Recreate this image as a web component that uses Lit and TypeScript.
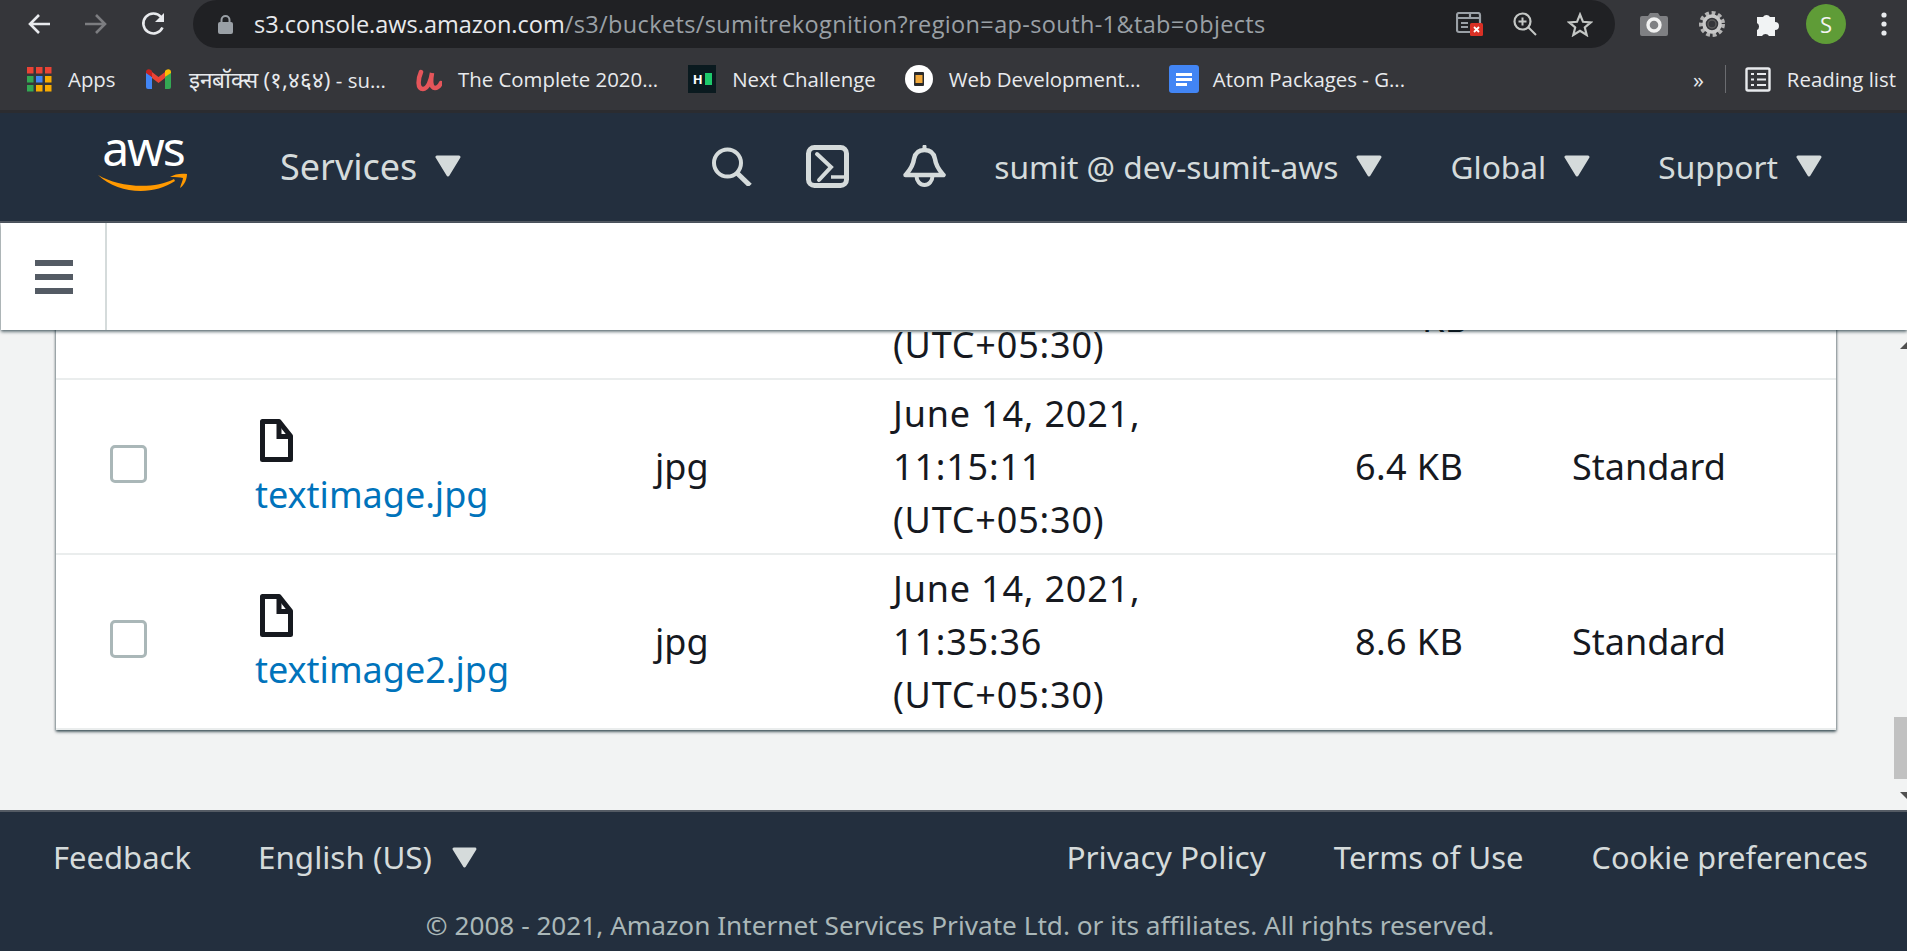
import { LitElement, html, css, svg } from 'lit';
import { customElement } from 'lit/decorators.js';

const caret = html`<svg class="caret" viewBox="0 0 26 22"><path d="M2 2h22L13 20z" fill="#d5dbdb" stroke="#d5dbdb" stroke-width="3" stroke-linejoin="round"/></svg>`;

const fileIcon = html`<svg class="file" width="33" height="43" viewBox="0 0 33 43">
  <path d="M2.5 2.5H19L30.5 17V40.5H2.5z" fill="#fff" stroke="#16191f" stroke-width="5" stroke-linejoin="round"/>
  <path d="M19 3V17.5H30" fill="none" stroke="#16191f" stroke-width="5"/>
</svg>`;

const rows = [
  { name: '', type: '', date: ['', '', '(UTC+05:30)'], size: ['', 'KB'], cls: '', partial: true },
  { name: 'textimage.jpg', type: 'jpg', date: ['June 14, 2021,', '11:15:11', '(UTC+05:30)'], size: ['6.4 KB'], cls: 'Standard', partial: false },
  { name: 'textimage2.jpg', type: 'jpg', date: ['June 14, 2021,', '11:35:36', '(UTC+05:30)'], size: ['8.6 KB'], cls: 'Standard', partial: false },
];

const appColors = ['#ea4335', '#ea4335', '#ea4335', '#34a853', '#4285f4', '#f9ab00', '#34a853', '#f9ab00', '#f9ab00'];

@customElement('browser-chrome')
class BrowserChrome extends LitElement {
  static styles = css`
    :host {
      display: block;
      height: 113px;
      background: #35363a;
      border-bottom: 3px solid #2b2c30;
      box-sizing: border-box;
      font-family: 'Open Sans', sans-serif;
      color: #e8eaed;
    }
    .top {
      height: 48px;
      display: flex;
      align-items: center;
    }
    .nav {
      width: 193px;
      flex: none;
      display: flex;
      align-items: center;
      padding-left: 27px;
      gap: 33px;
      box-sizing: border-box;
    }
    .omni {
      width: 1422px;
      height: 48px;
      flex: none;
      background: #202124;
      border-radius: 24px;
      display: flex;
      align-items: center;
      padding-left: 25px;
      box-sizing: border-box;
    }
    .url {
      margin-left: 21px;
      font-size: 23.5px;
      letter-spacing: 0.37px;
      white-space: nowrap;
      width: 1209px;
      flex: none;
      color: #9aa0a6;
    }
    .url b {
      font-weight: 400;
      letter-spacing: 0;
      color: #e8eaed;
    }
    .omni-icons {
      display: flex;
      align-items: center;
      gap: 30px;
    }
    .ext {
      display: flex;
      align-items: center;
      margin-left: 25px;
      gap: 31px;
    }
    .avatar {
      width: 40px;
      height: 40px;
      border-radius: 50%;
      background: #5f9c37;
      color: #f4f4f4;
      display: flex;
      align-items: center;
      justify-content: center;
      font-size: 22px;
      margin-left: -7px;
    }
    .dots {
      margin-left: 4px;
    }
    .marks {
      height: 62px;
      display: flex;
      align-items: center;
      padding-left: 27px;
      font-size: 20.4px;
      white-space: nowrap;
    }
    .mark {
      display: flex;
      align-items: center;
      gap: 16px;
      margin-right: 30px;
    }
    .hi {
      font-size: 22.5px;
    }
    .hr {
      width: 28px;
      height: 28px;
      background: #0a1a1f;
      color: #fff;
      display: flex;
      align-items: center;
      justify-content: center;
      gap: 2px;
      font-size: 13px;
      font-weight: 700;
      line-height: 1;
    }
    .hr i {
      width: 7px;
      height: 12px;
      background: #1ec96b;
    }
    .spacer {
      flex: 1;
    }
    .more {
      font-size: 22px;
    }
    .sep {
      width: 1px;
      height: 28px;
      background: #6b6c70;
      margin: 0 19px 0 21px;
    }
    .reading {
      margin-right: 11px;
    }
  `;

  render() {
    return html`
      <div class="top">
        <div class="nav">
          <svg width="24" height="22" viewBox="0 0 24 22"><path d="M23 11H3M12 2l-9 9 9 9" fill="none" stroke="#e8eaed" stroke-width="2.6"/></svg>
          <svg width="24" height="22" viewBox="0 0 24 22"><path d="M1 11h20M12 2l9 9-9 9" fill="none" stroke="#7c7d80" stroke-width="2.6"/></svg>
          <svg width="26" height="24" viewBox="0 0 26 24"><path d="M21.5 15.5A10 10 0 1 1 20 5" fill="none" stroke="#e8eaed" stroke-width="2.6"/><path d="M23 1v9h-9z" fill="#e8eaed"/></svg>
        </div>
        <div class="omni">
          <svg width="15" height="19" viewBox="0 0 15 19"><rect x="0" y="7" width="15" height="12" rx="2" fill="#9aa0a6"/><path d="M3.5 8V5a4 4 0 0 1 8 0v3" fill="none" stroke="#9aa0a6" stroke-width="2"/></svg>
          <div class="url"><b>s3.console.aws.amazon.com</b>/s3/buckets/sumitrekognition?region=ap-south-1&amp;tab=objects</div>
          <div class="omni-icons">
            <svg width="27" height="24" viewBox="0 0 27 24" style="margin-left:-7px">
              <path d="M1 3a2 2 0 0 1 2-2h19a2 2 0 0 1 2 2v17H3a2 2 0 0 1-2-2z" fill="none" stroke="#9aa0a6" stroke-width="2.2"/>
              <path d="M1 6h23M14 2v4M5 11h7M5 15h7" stroke="#9aa0a6" stroke-width="2.2"/>
              <rect x="14" y="11" width="13" height="13" rx="1.5" fill="#d93025"/>
              <path d="M18 15l5 5M23 15l-5 5" stroke="#fff" stroke-width="1.8"/>
            </svg>
            <svg width="24" height="24" viewBox="0 0 24 24"><circle cx="9.5" cy="9.5" r="8" fill="none" stroke="#c4c7c5" stroke-width="2.2"/><path d="M15 15l8 8M9.5 5.5v8M5.5 9.5h8" stroke="#c4c7c5" stroke-width="2"/></svg>
            <svg width="26" height="25" viewBox="0 0 26 25"><path d="M13 2.5l3 7.3 7.8.6-6 5 1.9 7.6L13 18.8l-6.700 4.200 1.900-7.600-6-5 7.800-.6z" fill="none" stroke="#c4c7c5" stroke-width="2.200" stroke-linejoin="miter"/></svg>
          </div>
        </div>
        <div class="ext">
          <svg width="28" height="24" viewBox="0 0 28 24"><path d="M2 4h6l2-3h8l2 3h6a2 2 0 0 1 2 2v16a2 2 0 0 1-2 2H2a2 2 0 0 1-2-2V6a2 2 0 0 1 2-2z" fill="#7f8083"/><circle cx="14" cy="13" r="6" fill="none" stroke="#f1f1f1" stroke-width="3.400"/></svg>
          <svg width="26" height="26" viewBox="0 0 26 26"><circle cx="13" cy="13" r="10.500" fill="none" stroke="#b4b4b4" stroke-width="5" stroke-dasharray="3.600 2.500"/><circle cx="13" cy="13" r="8" fill="none" stroke="#c9c9c9" stroke-width="3.500"/><circle cx="13" cy="13" r="4" fill="none" stroke="#5a5a5a" stroke-width="1.500"/></svg>
          <svg width="26" height="25" viewBox="0 0 26 25"><path d="M1 11V5h6a4 4 0 0 1 7 0h5v5a4 4 0 0 1 0 8v6h-6a4 4 0 0 0-7 0H1v-6a4 4 0 0 0 0-7z" fill="#f1f3f4"/></svg>
          <div class="avatar">S</div>
          <svg class="dots" width="6" height="24" viewBox="0 0 6 24"><circle cx="3" cy="3" r="2.600" fill="#e8eaed"/><circle cx="3" cy="12" r="2.600" fill="#e8eaed"/><circle cx="3" cy="21" r="2.600" fill="#e8eaed"/></svg>
        </div>
      </div>
      <div class="marks">
        <div class="mark">
          <svg width="25" height="25" viewBox="0 0 25 25">
            ${appColors.map((c, i) => svg`<rect x=${(i % 3) * 9} y=${Math.floor(i / 3) * 9} width="6.500" height="6.500" fill=${c}/>`)}
          </svg>
          <span>Apps</span>
        </div>
        <div class="mark" style="gap:18px">
          <svg width="25" height="20" viewBox="0 0 25 20">
            <path d="M0 3v15a2 2 0 0 0 2 2h4V8z" fill="#4285f4"/>
            <path d="M25 3v15a2 2 0 0 1-2 2h-4V8z" fill="#34a853"/>
            <path d="M6 9l6.500 5L19 9V3l-6.500 5L6 3z" fill="#ea4335"/>
            <path d="M0 3c0-3 3-3.500 5-2l1 1v6L0 4z" fill="#c5221f"/>
            <path d="M25 3c0-3-3-3.500-5-2l-1 1v6l6-4z" fill="#fbbc04"/>
          </svg>
          <span><span class="hi">इनबॉक्स (१,४६४)</span> - su...</span>
        </div>
        <div class="mark">
          <svg width="26" height="26" viewBox="0 0 26 26"><path d="M5 6C2 13 1 23 7 23c5 0 8-9 9-16-1 6-2 15 3 15 3 0 5-3 6-5" fill="none" stroke="#e5555a" stroke-width="4.500" stroke-linecap="round"/></svg>
          <span>The Complete 2020...</span>
        </div>
        <div class="mark" style="margin-right:29px">
          <div class="hr">H<i></i></div>
          <span>Next Challenge</span>
        </div>
        <div class="mark" style="margin-right:28px">
          <svg width="28" height="28" viewBox="0 0 28 28"><circle cx="14" cy="14" r="14" fill="#fff"/><rect x="9" y="7" width="10" height="14" rx="1" fill="#2b2b2b"/><rect x="10.500" y="10" width="7" height="8" fill="#f2a93b"/></svg>
          <span>Web Development...</span>
        </div>
        <div class="mark" style="gap:14px">
          <svg width="30" height="28" viewBox="0 0 30 28"><rect width="30" height="28" rx="3" fill="#4285f4"/><path d="M7 8h16v3H7zM7 13h16v3H7zM7 18h11v3H7z" fill="#fff"/></svg>
          <span>Atom Packages - G...</span>
        </div>
        <div class="spacer"></div>
        <span class="more">»</span>
        <div class="sep"></div>
        <div class="mark reading">
          <svg width="26" height="25" viewBox="0 0 26 25"><rect x="1.500" y="1.500" width="23" height="22" rx="1.500" fill="none" stroke="#e8eaed" stroke-width="2.400"/><path d="M6 7h3M12 7h9M6 12.500h3M12 12.500h9M6 18h3M12 18h9" stroke="#e8eaed" stroke-width="2.200"/></svg>
          <span>Reading list</span>
        </div>
      </div>
    `;
  }
}

@customElement('console-header')
class ConsoleHeader extends LitElement {
  static styles = css`
    :host {
      display: flex;
      align-items: center;
      height: 110px;
      box-sizing: border-box;
      background: #232f3e;
      border-bottom: 2px solid #545b64;
      padding: 0 0 2px 98px;
      font-family: 'Noto Sans', sans-serif;
      font-size: 31.7px;
      color: #d5dbdb;
      white-space: nowrap;
    }
    .logo {
      width: 90px;
      flex: none;
      display: flex;
      flex-direction: column;
      align-items: center;
      height: 64px;
    }
    .logo span {
      display: block;
      height: 38px;
      font-size: 48px;
      line-height: 28px;
      color: #fff;
      letter-spacing: -2px;
    }
    .menu {
      display: flex;
      align-items: center;
      gap: 18px;
    }
    .caret {
      width: 26px;
      height: 22px;
      flex: none;
    }
    .services {
      margin-left: 92px;
      font-size: 36px;
    }
    .tools {
      display: flex;
      align-items: center;
      margin-left: 251px;
      gap: 54px;
    }
    .account {
      margin-left: 48px;
    }
    .region {
      margin-left: 68px;
    }
    .support {
      margin-left: 68px;
    }
  `;

  render() {
    return html`
      <div class="logo">
        <span>aws</span>
        <svg width="90" height="22" viewBox="0 0 90 22">
          <path d="M0 3C20 15 55 18 76 7l1 2C55 24 20 22 0 3z" fill="#f90"/>
          <path d="M72 5c4-3 12-4 17-3 0 4-2 11-7 14 1-4 3-8 3-10-3-1-8-1-13-1z" fill="#f90"/>
        </svg>
      </div>
      <div class="menu services"><span>Services</span>${caret}</div>
      <div class="tools">
        <svg width="40" height="40" viewBox="0 0 40 40"><circle cx="15.500" cy="17" r="13.500" fill="none" stroke="#d5dbdb" stroke-width="4"/><path d="M25 27l13 12.500" stroke="#d5dbdb" stroke-width="5"/></svg>
        <svg width="43" height="43" viewBox="0 0 43 43"><rect x="2.500" y="2.500" width="38" height="38" rx="6" fill="none" stroke="#d5dbdb" stroke-width="5"/><path d="M11 9l14 13-12 13" fill="none" stroke="#d5dbdb" stroke-width="4" stroke-linecap="round"/><path d="M25 32h14" stroke="#d5dbdb" stroke-width="3.500"/></svg>
        <svg width="43" height="43" viewBox="0 0 43 43"><path d="M2.500 30C6 26 10 22 11 14 12 8 16 5 21.500 5S31 8 32 14c1 8 5 12 8.500 16z" fill="none" stroke="#d5dbdb" stroke-width="4.500" stroke-linejoin="round"/><path d="M21.500 1.500V5" stroke="#d5dbdb" stroke-width="4" stroke-linecap="round"/><path d="M13.500 31a8 9 0 0 0 16 0" fill="none" stroke="#d5dbdb" stroke-width="4"/></svg>
      </div>
      <div class="menu account"><span>sumit @ dev-sumit-aws</span>${caret}</div>
      <div class="menu region"><span>Global</span>${caret}</div>
      <div class="menu support"><span>Support</span>${caret}</div>
    `;
  }
}

@customElement('console-footer')
class ConsoleFooter extends LitElement {
  static styles = css`
    :host {
      display: block;
      height: 141px;
      box-sizing: border-box;
      background: #232f3e;
      border-top: 2px solid #545b64;
      font-family: 'Noto Sans', sans-serif;
      color: #d5dbdb;
      white-space: nowrap;
    }
    .links {
      display: flex;
      align-items: center;
      justify-content: space-between;
      padding: 23px 39px 0 53px;
      font-size: 31px;
      line-height: 44px;
    }
    .group {
      display: flex;
      align-items: center;
    }
    .left {
      gap: 67px;
    }
    .right {
      gap: 68px;
    }
    .lang {
      display: flex;
      align-items: center;
      gap: 20px;
      font-size: 31.4px;
    }
    .privacy {
      font-size: 31.6px;
    }
    .cookie {
      font-size: 30.6px;
    }
    .caret {
      width: 25px;
      height: 21px;
    }
    .copy {
      margin-top: 29px;
      text-align: center;
      font-size: 26.2px;
      line-height: 34px;
      color: #aab7b8;
      padding-left: 13px;
    }
  `;

  render() {
    return html`
      <div class="links">
        <div class="group left">
          <span>Feedback</span>
          <span class="lang">English (US) ${caret}</span>
        </div>
        <div class="group right">
          <span class="privacy">Privacy Policy</span>
          <span>Terms of Use</span>
          <span class="cookie">Cookie preferences</span>
        </div>
      </div>
      <div class="copy">© 2008 - 2021, Amazon Internet Services Private Ltd. or its affiliates. All rights reserved.</div>
    `;
  }
}

@customElement('app-root')
export class AppRoot extends LitElement {
  static styles = css`
    :host {
      display: flex;
      flex-direction: column;
      height: 951px;
      overflow: hidden;
      background: #f2f3f3;
      font-family: 'Noto Sans', sans-serif;
    }
    .bar {
      height: 107px;
      flex: none;
      background: #fff;
      display: flex;
      position: relative;
      z-index: 1;
      margin-left: 1px;
      box-shadow: 0 2px 3px rgba(0, 28, 36, 0.55), 0 0 2px rgba(0, 28, 36, 0.3);
    }
    .toggle {
      width: 70px;
      border-right: 2px solid #d5dbdb;
      display: flex;
      flex-direction: column;
      justify-content: center;
      gap: 8px;
      padding-left: 34px;
    }
    .toggle i {
      display: block;
      width: 38px;
      height: 6px;
      background: #545b64;
    }
    main {
      height: 480px;
      flex: none;
      display: flex;
      overflow: hidden;
    }
    .content {
      flex: 1;
      display: flex;
      flex-direction: column;
      justify-content: flex-end;
      padding: 0 58px 80px 56px;
      min-width: 0;
    }
    .card {
      flex: none;
      background: #fff;
      box-shadow: 0 2px 3px rgba(0, 28, 36, 0.55), 1px 1px 2px rgba(0, 28, 36, 0.25), -1px 1px 2px rgba(0, 28, 36, 0.25);
    }
    .row {
      height: 175px;
      box-sizing: border-box;
      display: grid;
      grid-template-columns: 199px 400px 238px 462px 217px 1fr;
      align-items: center;
      border-bottom: 2px solid #eaeded;
      font-size: 36px;
      line-height: 53px;
      color: #16191f;
    }
    .check {
      width: 37px;
      height: 38px;
      box-sizing: border-box;
      border: 3px solid #aab7b8;
      border-radius: 5px;
      margin-left: 54px;
      margin-top: -5px;
    }
    .name {
      display: flex;
      flex-direction: column;
      align-items: flex-start;
    }
    .file {
      display: block;
      margin-left: 5px;
    }
    .name a {
      color: #0073bb;
      text-decoration: none;
      margin: 6px 0 -7px;
    }
    .line {
      min-height: 53px;
    }
    .date {
      letter-spacing: 0.8px;
    }
    .size {
      letter-spacing: 0.4px;
    }
    .clipped-size {
      padding-left: 67px;
    }
    .track {
      width: 13px;
      flex: none;
      display: flex;
      flex-direction: column;
    }
    .up,
    .down {
      width: 0;
      height: 0;
      margin-left: 6px;
      border-left: 7px solid transparent;
      border-right: 7px solid transparent;
    }
    .up {
      border-bottom: 7px solid #505050;
      margin-top: 12px;
    }
    .thumb {
      flex: none;
      width: 13px;
      height: 62px;
      background: #c1c1c1;
      margin-top: 368px;
    }
    .down {
      border-top: 7px solid #505050;
      margin-top: 13px;
    }
  `;

  render() {
    return html`
      <browser-chrome></browser-chrome>
      <console-header></console-header>
      <div class="bar">
        <div class="toggle"><i></i><i></i><i></i></div>
      </div>
      <main>
        <div class="content">
          <div class="card">
            ${rows.map(
              (r) => html`
                <div class="row">
                  <div>${r.partial ? '' : html`<div class="check"></div>`}</div>
                  <div class="name">
                    ${r.partial ? '' : html`${fileIcon}<a href="#">${r.name}</a>`}
                  </div>
                  <div>${r.type}</div>
                  <div class="date">${r.date.map((d) => html`<div class="line">${d}</div>`)}</div>
                  <div class="size ${r.partial ? 'clipped-size' : ''}">${r.size.map((d) => html`<div class="line">${d}</div>`)}</div>
                  <div>${r.cls}</div>
                </div>
              `
            )}
          </div>
        </div>
        <div class="track">
          <div class="up"></div>
          <div class="thumb"></div>
          <div class="down"></div>
        </div>
      </main>
      <console-footer></console-footer>
    `;
  }
}
